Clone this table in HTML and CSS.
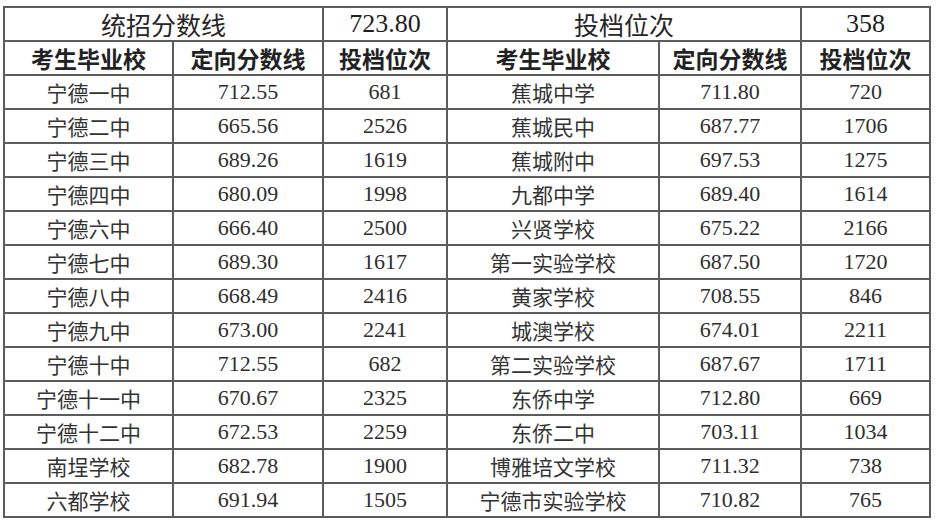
FILE: index.html
```html
<!DOCTYPE html>
<html lang="zh-CN">
<head>
<meta charset="utf-8">
<title>统招分数线</title>
<link rel="stylesheet" href="styles.css">
</head>
<body>
<table class="score-table">
  <colgroup>
    <col class="c1"><col class="c2"><col class="c3"><col class="c4"><col class="c5"><col class="c6">
  </colgroup>
  <thead>
    <tr class="top-row">
      <th colspan="2" class="zh">统招分数线</th>
      <th class="num">723.80</th>
      <th colspan="2" class="zh">投档位次</th>
      <th class="num">358</th>
    </tr>
    <tr class="head-row">
      <th>考生毕业校</th><th>定向分数线</th><th>投档位次</th>
      <th>考生毕业校</th><th>定向分数线</th><th>投档位次</th>
    </tr>
  </thead>
  <tbody>
    <tr><td class="zh">宁德一中</td><td class="num">712.55</td><td class="num">681</td><td class="zh">蕉城中学</td><td class="num">711.80</td><td class="num">720</td></tr>
    <tr><td class="zh">宁德二中</td><td class="num">665.56</td><td class="num">2526</td><td class="zh">蕉城民中</td><td class="num">687.77</td><td class="num">1706</td></tr>
    <tr><td class="zh">宁德三中</td><td class="num">689.26</td><td class="num">1619</td><td class="zh">蕉城附中</td><td class="num">697.53</td><td class="num">1275</td></tr>
    <tr><td class="zh">宁德四中</td><td class="num">680.09</td><td class="num">1998</td><td class="zh">九都中学</td><td class="num">689.40</td><td class="num">1614</td></tr>
    <tr><td class="zh">宁德六中</td><td class="num">666.40</td><td class="num">2500</td><td class="zh">兴贤学校</td><td class="num">675.22</td><td class="num">2166</td></tr>
    <tr><td class="zh">宁德七中</td><td class="num">689.30</td><td class="num">1617</td><td class="zh">第一实验学校</td><td class="num">687.50</td><td class="num">1720</td></tr>
    <tr><td class="zh">宁德八中</td><td class="num">668.49</td><td class="num">2416</td><td class="zh">黄家学校</td><td class="num">708.55</td><td class="num">846</td></tr>
    <tr><td class="zh">宁德九中</td><td class="num">673.00</td><td class="num">2241</td><td class="zh">城澳学校</td><td class="num">674.01</td><td class="num">2211</td></tr>
    <tr><td class="zh">宁德十中</td><td class="num">712.55</td><td class="num">682</td><td class="zh">第二实验学校</td><td class="num">687.67</td><td class="num">1711</td></tr>
    <tr><td class="zh">宁德十一中</td><td class="num">670.67</td><td class="num">2325</td><td class="zh">东侨中学</td><td class="num">712.80</td><td class="num">669</td></tr>
    <tr><td class="zh">宁德十二中</td><td class="num">672.53</td><td class="num">2259</td><td class="zh">东侨二中</td><td class="num">703.11</td><td class="num">1034</td></tr>
    <tr><td class="zh">南埕学校</td><td class="num">682.78</td><td class="num">1900</td><td class="zh">博雅培文学校</td><td class="num">711.32</td><td class="num">738</td></tr>
    <tr><td class="zh">六都学校</td><td class="num">691.94</td><td class="num">1505</td><td class="zh">宁德市实验学校</td><td class="num">710.82</td><td class="num">765</td></tr>
  </tbody>
</table>
</body>
</html>
```

FILE: styles.css
```css
html, body {
  margin: 0;
  padding: 0;
  background: #ffffff;
}

.score-table {
  margin: 6px 0 0 3px;
  width: 926px;
  table-layout: fixed;
  border-collapse: collapse;
  color: #2a2a2a;
  font-family: "Noto Sans CJK SC", sans-serif;
}

.c1 { width: 169px; }
.c2 { width: 150px; }
.c3 { width: 124px; }
.c4 { width: 212px; }
.c5 { width: 142px; }
.c6 { width: 129px; }

.score-table th,
.score-table td {
  border: 2px solid #5c5c5c;
  padding: 0;
  height: 32px;
  text-align: center;
  vertical-align: middle;
  line-height: 1;
  white-space: nowrap;
}

.score-table td.zh {
  font-size: 21px;
  font-weight: 400;
  color: #333333;
}

.score-table td.num {
  font-family: "Liberation Serif", serif;
  font-size: 22px;
  color: #2e2e2e;
}

.top-row th.zh {
  font-size: 25px;
  font-weight: 400;
  color: #262626;
}

.top-row th.num {
  font-family: "Liberation Serif", serif;
  font-size: 26px;
  font-weight: 400;
  color: #1e1e1e;
}

.head-row th {
  font-size: 23px;
  font-weight: 700;
  color: #222222;
}
```
